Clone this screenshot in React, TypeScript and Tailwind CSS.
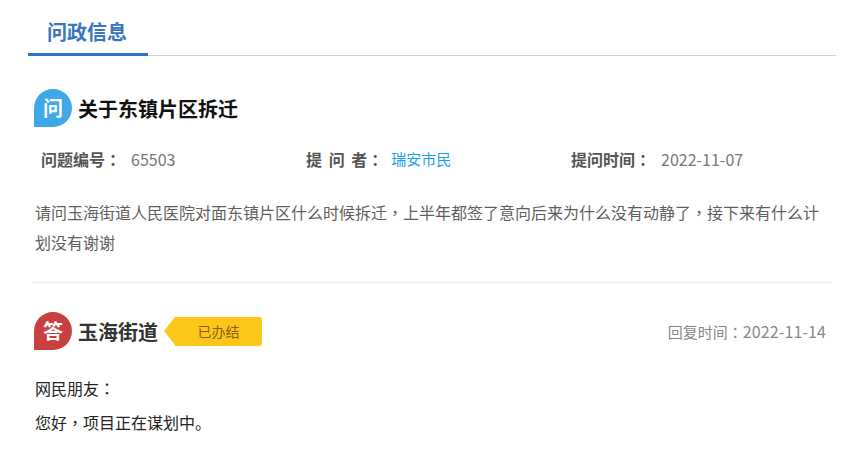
const font = { fontFamily: '"Noto Sans CJK SC", "Open Sans", sans-serif' };

function P({ children }: { children: string }) {
  return <span className="font-['Noto_Sans_CJK_TC']">{children}</span>;
}

function Badge({ text, color }: { text: string; color: string }) {
  return (
    <div className={`flex h-[38px] w-[38px] shrink-0 items-center justify-center rounded-t-full rounded-br-full text-[20px] font-bold text-white ${color}`}>
      {text}
    </div>
  );
}

function Meta({ label, value, valueClass }: { label: string; value: string; valueClass: string }) {
  return (
    <div className="flex w-[265px] items-center">
      <span className="text-[16px] font-bold text-[#555] [word-spacing:3px]">
        {label}
        <P>：</P>
      </span>
      <span className={valueClass}>{value}</span>
    </div>
  );
}

export default function App() {
  return (
    <div className="h-[449px] w-[867px] overflow-hidden bg-white pl-[28px]" style={font}>
      <div className="flex h-[56px] w-[808px] border-b border-[#ccd2d9]">
        <div className="-mb-px h-[56px] w-[120px] border-b-[3px] border-[#2b74cb] pl-[19px] pt-[17px] text-[20px] leading-[30px] font-bold text-[#3a75c0]">
          问政信息
        </div>
      </div>
      <div className="ml-[6px] mt-[33px] flex items-center gap-[6px]">
        <Badge text="问" color="bg-[#3fa9e8]" />
        <h1 className="h-[38px] text-[20px] leading-[40px] font-bold text-[#111]">关于东镇片区拆迁</h1>
      </div>
      <div className="ml-[13px] mt-[19px] flex h-[26px] items-center">
        <Meta label="问题编号" value="65503" valueClass="ml-[10px] text-[16px] text-[#777]" />
        <Meta label="提 问 者" value="瑞安市民" valueClass="ml-[8px] text-[15px] text-[#1ea0f0]" />
        <Meta label="提问时间" value="2022-11-07" valueClass="ml-[10px] text-[16px] text-[#777]" />
      </div>
      <p className="ml-[7px] mt-[25px] w-[790px] text-[16px] leading-[30px] text-[#5f5f5f]">
        请问玉海街道人民医院对面东镇片区什么时候拆迁<P>，</P>上半年都签了意向后来为什么没有动静了<P>，</P>接下来有什么计划没有谢谢
      </p>
      <div className="ml-[4px] mt-[25px] h-px w-[800px] bg-[#eeeeee]" />
      <div className="ml-[6px] mt-[29px] flex w-[792px] items-center">
        <Badge text="答" color="bg-[#c94040]" />
        <h2 className="ml-[6px] h-[38px] text-[20px] leading-[40px] font-bold text-[#333]">玉海街道</h2>
        <div className="relative ml-[17px] flex h-[29px] w-[87px] items-center justify-center rounded-r-[3px] bg-[#fdc71a] text-[14px] text-[#86600f]">
          <span className="absolute right-full top-0 h-0 w-0 border-y-[14.5px] border-r-[11px] border-y-transparent border-r-[#fdc71a]" />
          已办结
        </div>
        <span className="ml-auto text-[15px] text-[#888]">
          回复时间<P>：</P>
          <span className="text-[16px] tracking-[0.1px]">2022-11-14</span>
        </span>
      </div>
      <p className="ml-[7px] mt-[21px] text-[16px] leading-[34px] text-[#222]">
        网民朋友<P>：</P>
      </p>
      <p className="ml-[7px] text-[16px] leading-[34px] text-[#222]">
        您好<P>，</P>项目正在谋划中。
      </p>
    </div>
  );
}
